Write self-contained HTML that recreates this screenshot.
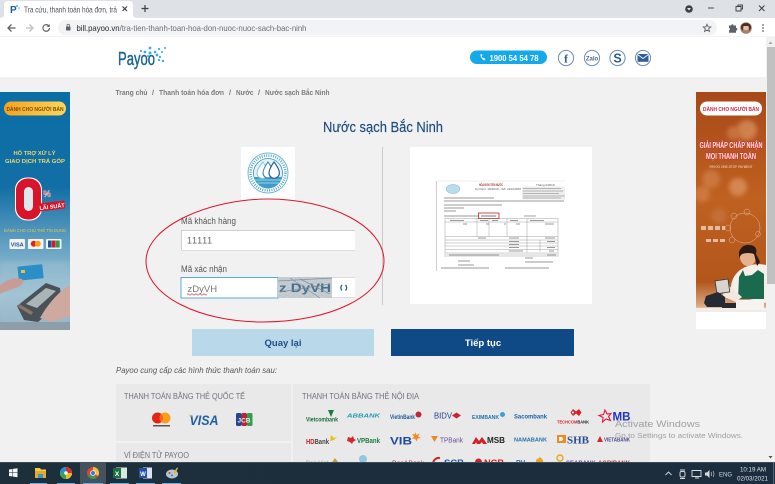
<!DOCTYPE html>
<html><head><meta charset="utf-8"><title>Nước sạch Bắc Ninh</title>
<style>
html,body{margin:0;padding:0;width:775px;height:484px;overflow:hidden;background:#f1f1f1}
svg{display:block;font-family:"Liberation Sans","Noto Sans CJK SC",sans-serif;filter:blur(.3px)}
</style></head><body>
<svg width="775" height="484" viewBox="0 0 775 484" xmlns="http://www.w3.org/2000/svg">
<defs>
<linearGradient id="lb" x1="0" y1="0" x2="0" y2="1"><stop offset="0" stop-color="#0b6ea6"/><stop offset=".4" stop-color="#126fa5"/><stop offset=".62" stop-color="#5c9cc0"/><stop offset=".85" stop-color="#a9c9d9"/><stop offset="1" stop-color="#8fa9b8"/></linearGradient>
<linearGradient id="rb" x1="0" y1="0" x2="0" y2="1"><stop offset="0" stop-color="#a8481a"/><stop offset=".45" stop-color="#bf6120"/><stop offset=".8" stop-color="#b2561c"/><stop offset=".9" stop-color="#dba57e"/><stop offset=".93" stop-color="#f6e8dd"/><stop offset=".95" stop-color="#fff"/></linearGradient>
<linearGradient id="pill" x1="0" y1="0" x2="1" y2="0"><stop offset="0" stop-color="#f5a21c"/><stop offset="1" stop-color="#fbd75a"/></linearGradient>
<linearGradient id="tb" x1="0" y1="0" x2="1" y2="0"><stop offset="0" stop-color="#1d2f3b"/><stop offset="1" stop-color="#1c2d3f"/></linearGradient>
<filter id="b2"><feGaussianBlur stdDeviation="2.5"/></filter>
<filter id="b0"><feGaussianBlur stdDeviation=".3"/></filter>
<filter id="noise" x="0" y="0" width="100%" height="100%"><feTurbulence type="fractalNoise" baseFrequency=".9" numOctaves="2" seed="4"/><feColorMatrix values="0 0 0 0 .45  0 0 0 0 .5  0 0 0 0 .54  1.6 0 0 0 -.35"/></filter>
<clipPath id="lc"><rect x="0" y="92" width="70" height="238"/></clipPath>
<clipPath id="rc"><rect x="696" y="92" width="70" height="237"/></clipPath>
<clipPath id="pc"><rect x="116" y="384" width="534" height="78"/></clipPath>
</defs>

<!-- page -->
<rect width="775" height="484" fill="#f1f1f1"/>

<!-- Chrome tab strip -->
<rect width="775" height="18" fill="#dee1e6"/>
<path d="M0 18 Q4 18 4 14V5Q4 1 8 1H129Q133 1 133 5V14Q133 18 137 18Z" fill="#fff"/>
<text x="10" y="13" font-size="10" font-weight="700" fill="#1b5a92">P</text>
<circle cx="17" cy="6" r="1" fill="#49b4e6"/><circle cx="19" cy="8" r=".8" fill="#49b4e6"/>
<text x="24" y="12.500" font-size="8.300" fill="#4a4d52" textLength="93" lengthAdjust="spacingAndGlyphs">Tra cứu, thanh toán hóa đơn, trả</text>
<path d="M122.500 6.500l4.500 4.500m0-4.500l-4.500 4.500" stroke="#3c4043" stroke-width="1.200" fill="none"/>
<path d="M145 5v7M141.500 8.500h7" stroke="#3c4043" stroke-width="1.200" fill="none"/>
<circle cx="689" cy="9" r="3.800" fill="#3c4043"/><path d="M687 8h4l-2 2.500z" fill="#e4e6ea"/>
<path d="M708 8h6" stroke="#4a4d52" stroke-width="1"/>
<path d="M736 6.500h5v4.500h-5zM738 6.500v-1.500h4.500v4h-1.500" stroke="#3c4043" stroke-width=".9" fill="none"/>
<path d="M759 5.500l5.500 5.500m0-5.500l-5.500 5.500" stroke="#3c4043" stroke-width="1" fill="none"/>

<!-- toolbar -->
<rect y="18" width="775" height="19" fill="#fff"/>
<rect y="36.500" width="775" height="1" fill="#e8eaed"/>
<path d="M15.500 28h-7M11.500 24.500l-3.500 3.500 3.500 3.500" stroke="#5f6368" stroke-width="1.300" fill="none"/>
<path d="M26 28h7M29.500 24.500l3.500 3.500-3.500 3.500" stroke="#bcbfc3" stroke-width="1.300" fill="none"/>
<path d="M49.500 28a3.300 3.300 0 1 1-1-2.400" stroke="#5f6368" stroke-width="1.200" fill="none"/><path d="M49.700 24v3h-3z" fill="#5f6368"/>
<rect x="58" y="20" width="659" height="15.500" rx="7.750" fill="#f1f3f4"/>
<rect x="66" y="26.500" width="4.500" height="4" rx=".5" fill="#5f6368"/><path d="M67 26.500v-1a1.250 1.250 0 0 1 2.500 0v1" stroke="#5f6368" stroke-width=".7" fill="none"/>
<text x="76.500" y="31" font-size="8.300" fill="#6a6d72" textLength="230" lengthAdjust="spacingAndGlyphs"><tspan fill="#26282b">bill.payoo.vn</tspan>/tra-tien-thanh-toan-hoa-don-nuoc-nuoc-sach-bac-ninh</text>
<path d="M707 24.300l1.100 2.500 2.700.2-2.100 1.800.7 2.600-2.400-1.400-2.400 1.400.7-2.600-2.100-1.800 2.700-.2z" stroke="#5f6368" stroke-width=".9" fill="none"/>
<path d="M729 25.500h2.200a1.200 1.200 0 0 1 2.400 0h2.400v2.400a1.300 1.300 0 0 1 0 2.600v2.300h-7v-2.400a1.300 1.300 0 0 0 0-2.500z" fill="#5f6368"/>
<circle cx="746" cy="28" r="5.800" fill="#a9806a"/><circle cx="746" cy="27.500" r="2.800" fill="#e6bfa9"/><path d="M741 28q0-5 5-5t5 5l-1.500 3-1-5h-5l-1 5z" fill="#4b2c22"/>
<circle cx="763" cy="25" r=".9" fill="#5f6368"/><circle cx="763" cy="28" r=".9" fill="#5f6368"/><circle cx="763" cy="31" r=".9" fill="#5f6368"/>

<!-- Page header -->
<rect y="37" width="766" height="40" fill="#fff"/>
<text x="118" y="65" font-size="18.500" fill="#1a6496" stroke="#1a6496" stroke-width=".45" textLength="37" lengthAdjust="spacingAndGlyphs">Payoo</text>
<g fill="#37ade2">
<circle cx="141" cy="51" r="1.100"/><circle cx="145" cy="52" r="1.400"/><circle cx="150" cy="48" r="1.400"/><circle cx="150" cy="53" r="1.500"/><circle cx="155" cy="52" r="1.300"/><circle cx="159" cy="49" r="1.100"/><circle cx="165" cy="48" r="1"/><circle cx="162" cy="52" r="1"/><circle cx="157" cy="55" r="1.400"/><circle cx="160" cy="57" r="1.100"/><circle cx="163" cy="61" r="1.200"/><circle cx="159" cy="60" r="1.100"/><circle cx="148" cy="56" r="1"/>
</g>
<rect x="470" y="50.500" width="77" height="13.500" rx="6.750" fill="#13a9ea"/>
<path d="M480.500 54.500q-.5 3 3.500 6l1.500-1.200-1.500-1.600-1 .6q-1-1-1.300-2l.8-.8-.8-1.700z" fill="#fff"/>
<text x="489.500" y="60.800" font-size="8.500" font-weight="700" fill="#fff" textLength="49" lengthAdjust="spacingAndGlyphs">1900 54 54 78</text>
<g fill="#fff" stroke="#6c8db5" stroke-width="1">
<circle cx="566" cy="58" r="7.600"/><circle cx="592" cy="58" r="7.600"/><circle cx="617.500" cy="58" r="7.600"/><circle cx="643" cy="58" r="7.600"/>
</g>
<text x="566" y="62.500" font-size="12" font-weight="700" fill="#2f5d98" text-anchor="middle" font-family="Liberation Serif">f</text>
<text x="592" y="60.500" font-size="6" font-weight="700" fill="#45699b" text-anchor="middle">Zalo</text>
<text x="617.500" y="62.500" font-size="12.500" font-weight="700" fill="#2f5d98" text-anchor="middle">S</text>
<rect x="637.500" y="54" width="11" height="7.800" fill="#2f5d98"/><path d="M637.500 54.500l5.500 4 5.500-4" stroke="#fff" stroke-width=".8" fill="none"/>

<!-- Scrollbar -->
<rect x="766" y="37" width="9" height="425" fill="#f1f1f1"/>
<rect x="767" y="47" width="8" height="237" fill="#c1c1c1"/>
<path d="M770.500 41.500l-2 2.500h4z" fill="#a3a3a3"/>
<path d="M768.500 456l2 2.500 2-2.500z" fill="#505050"/>

<!-- breadcrumb -->
<g font-size="7.300" font-weight="700" fill="#7b7b7b">
<text x="115.500" y="95" textLength="32" lengthAdjust="spacingAndGlyphs">Trang chủ</text>
<text x="152" y="95">/</text>
<text x="159" y="95" textLength="65" lengthAdjust="spacingAndGlyphs">Thanh toán hóa đơn</text>
<text x="229" y="95">/</text>
<text x="236" y="95" textLength="17.500" lengthAdjust="spacingAndGlyphs">Nước</text>
<text x="258" y="95">/</text>
<text x="265" y="95" textLength="64.500" lengthAdjust="spacingAndGlyphs">Nước sạch Bắc Ninh</text>
</g>

<!-- Left banner -->
<g clip-path="url(#lc)">
<rect y="92" width="70" height="238" fill="url(#lb)"/>
<rect x="4" y="101.500" width="62" height="14" rx="7" fill="url(#pill)"/>
<text x="35" y="110.800" font-size="5" font-weight="700" fill="#7a4a10" text-anchor="middle" textLength="57" lengthAdjust="spacingAndGlyphs">DÀNH CHO NGƯỜI BÁN</text>
<text x="34.500" y="155" font-size="5.800" font-weight="700" fill="#f3d36c" text-anchor="middle" textLength="42" lengthAdjust="spacingAndGlyphs">HỖ TRỢ XỬ LÝ</text>
<text x="35" y="163" font-size="5.800" font-weight="700" fill="#f3d36c" text-anchor="middle" textLength="60" lengthAdjust="spacingAndGlyphs">GIAO DỊCH TRẢ GÓP</text>
<rect x="15" y="177.500" width="27" height="43" rx="12" fill="#fff"/>
<rect x="16" y="178.500" width="25" height="41" rx="11.500" fill="#d8142a"/>
<rect x="24" y="187" width="9" height="24" rx="4.500" fill="#dfe8ee"/>
<text x="47" y="197" font-size="9" font-weight="700" fill="#e01a2c" stroke="#fff" stroke-width=".3" text-anchor="middle">%</text>
<rect x="39" y="202" width="26" height="8" fill="#d8142a" rx="1" transform="rotate(-7 52 206)"/>
<text x="52" y="208.500" font-size="5.500" font-weight="700" fill="#fff" text-anchor="middle" transform="rotate(-7 52 206)">LÃI SUẤT</text>
<text x="35" y="232" font-size="4.400" fill="#e7c94e" text-anchor="middle" textLength="62" lengthAdjust="spacingAndGlyphs">DÀNH CHO CHỦ THẺ TÍN DỤNG</text>
<rect x="9.500" y="239" width="15.500" height="10" rx="1" fill="#f3f3f3"/><text x="17.200" y="246.500" font-size="5.500" font-weight="700" fill="#25508f" text-anchor="middle">VISA</text>
<rect x="28" y="239" width="15.500" height="10" rx="1" fill="#f3f3f3"/><circle cx="33.800" cy="243.800" r="3" fill="#e2231a"/><circle cx="37.800" cy="243.800" r="3" fill="#f79e1b"/>
<rect x="46" y="239" width="15.500" height="10" rx="1" fill="#f3f3f3"/><rect x="48" y="240.500" width="3.700" height="7" fill="#25508f"/><rect x="52" y="240.500" width="3.700" height="7" fill="#c8202f"/><rect x="56" y="240.500" width="3.700" height="7" fill="#2b9c4a"/>
<rect x="0" y="262" width="70" height="68" fill="#9dbfd0" opacity=".5" filter="url(#b2)"/>
<rect x="18" y="265.500" width="25" height="14" rx="1" fill="#2c8ec6" transform="rotate(-6 30 272)"/>
<rect x="21" y="270" width="4" height="3" fill="#e2c24d"/>
<path d="M0 285Q12 276 22 279 26 283 18 287L4 292 0 294z" fill="#c99b97"/>
<path d="M17 306L46 283 60 288 62 302 38 322 24 320z" fill="#4a5258"/>
<path d="M26 304L46 288 56 291 37 308z" fill="#a9b5b7"/>
<path d="M19 304l14 8-2 3-13-8z" fill="#9e7e6e" opacity=".8"/>
<path d="M40 318Q50 300 66 287L70 286V316L52 322z" fill="#cda9a0"/>
<rect y="322" width="70" height="8" fill="#8e9ea8"/>
</g>

<!-- Right banner -->
<g clip-path="url(#rc)">
<rect x="696" y="92" width="70" height="237" fill="url(#rb)"/>
<g filter="url(#b2)" opacity=".55">
<circle cx="747" cy="130" r="10" fill="#e8a878"/><circle cx="734" cy="133" r="7" fill="#d98d58"/><circle cx="711" cy="179" r="9" fill="#d98d58"/><circle cx="738" cy="187" r="9" fill="#e8a878"/><circle cx="702" cy="194" r="8" fill="#d98d58"/><circle cx="719" cy="216" r="8" fill="#cc7a48"/>
</g>
<rect x="700" y="101.500" width="62" height="14" rx="7" fill="#fff"/>
<text x="731" y="110.800" font-size="5" font-weight="700" fill="#d8243a" text-anchor="middle" textLength="56" lengthAdjust="spacingAndGlyphs">DÀNH CHO NGƯỜI BÁN</text>
<g font-size="8" font-weight="700" text-anchor="middle" fill="#fde9e2" stroke="#d8243a" stroke-width=".9" style="paint-order:stroke fill">
<text x="731" y="148" textLength="63" lengthAdjust="spacingAndGlyphs">GIẢI PHÁP CHẤP NHẬN</text>
<text x="731" y="159" textLength="50" lengthAdjust="spacingAndGlyphs">MỌI THANH TOÁN</text>
</g>
<text x="731" y="168" font-size="4" fill="#f6dccf" text-anchor="middle" textLength="43" lengthAdjust="spacingAndGlyphs">PAYOO ONE-STOP PAYMENT</text>
<g fill="none" stroke="#f3d4c0" stroke-width=".5" opacity=".75">
<circle cx="745" cy="228" r="15"/><circle cx="734" cy="216" r="3"/><circle cx="747" cy="212" r="3"/><circle cx="728" cy="228" r="3"/><circle cx="732" cy="240" r="3"/><circle cx="758" cy="234" r="2.500"/>
</g>
<g fill="#f3d9c8" opacity=".75"><rect x="701" y="226" width="5" height="4"/><rect x="708" y="226" width="5" height="4"/><rect x="715" y="226" width="5" height="4"/><rect x="722" y="226" width="3" height="4"/>
<rect x="706" y="239" width="5" height="3"/><rect x="713" y="239" width="5" height="3"/><rect x="720" y="239" width="5" height="3"/></g>
<path d="M740 270Q728 280 732 295L766 303V265Q752 262 740 270z" fill="#f4efe9"/>
<path d="M739 277L738 299 764 299 764 274 758 270 752 275 745 276 743 270z" fill="#1a6a50"/>
<ellipse cx="748" cy="257" rx="8" ry="9" fill="#e6b391"/>
<path d="M739 252Q742 244 750 245 758 246 756 254L760 262 757 266 754 254Q748 252 742 254 740 256 739 258z" fill="#2a1a14"/>
<path d="M728 285L742 297 736 302 722 296z" fill="#f2e8df"/>
<path d="M716 280h13v13h-13z" fill="#d7d3d0" stroke="#333" stroke-width=".8" transform="rotate(-8 722 287)"/>
<path d="M706 296l12-4 7 5v10h-18l-3-4z" fill="#252a35"/>
<rect x="722" y="303" width="14" height="9" fill="#262b33"/>
<rect x="696" y="308" width="70" height="6" fill="#f1ece8"/>
<rect x="736" y="300" width="28" height="10" fill="#f6f3f0"/>
<rect x="696" y="312" width="70" height="18" fill="#fff"/>
</g>

<!-- Title -->
<text x="383" y="132" font-size="14.500" fill="#1c4a7c" stroke="#1c4a7c" stroke-width=".15" text-anchor="middle" textLength="120" lengthAdjust="spacingAndGlyphs">Nước sạch Bắc Ninh</text>

<!-- logo box -->
<rect x="241" y="147" width="54" height="53" fill="#fff"/>
<circle cx="268" cy="173" r="20" fill="#fff" stroke="#6fb8d8" stroke-width="1"/>
<circle cx="268" cy="173" r="14.500" fill="#e4f2f8" stroke="#2c94c0" stroke-width=".8"/>
<path d="M253.800 177h28.400a14.500 14.500 0 0 1-28.400 0z" fill="#3e9ec8"/>
<path d="M255 180h26M257 183h22" stroke="#bfe2f0" stroke-width=".7"/>
<path d="M263 162q-6 7-6 11a5.500 5.500 0 0 0 11 0q0-4-5-11z" fill="#fff" stroke="#8bc4de" stroke-width="1"/>
<path d="M268 162q-5 7-5 11a5 5 0 0 0 10 0q0-4-5-11z" fill="#fff" stroke="#2c7fb5" stroke-width="1"/>
<path d="M274 162q-5 7-5 11a5.200 5.200 0 0 0 10.400 0q0-4-5.400-11z" fill="#fff" stroke="#2b5f9e" stroke-width="1.200"/>
<circle cx="268" cy="173" r="17.500" fill="none" stroke="#5aa8c9" stroke-width="2.500" stroke-dasharray="1 1.300"/>

<!-- divider -->
<rect x="382" y="147" width="1" height="158" fill="#c9c9c9"/>

<!-- Invoice -->
<rect x="410" y="147" width="182" height="157" fill="#fff"/>
<g filter="url(#b0)">
<path d="M436.500 181v90" stroke="#bbb" stroke-width=".7"/>
<path d="M437 181H565" stroke="#ddd" stroke-width=".5"/>
<ellipse cx="453" cy="189" rx="7" ry="4.500" fill="#bcdcec" stroke="#6fb0d2" stroke-width=".5"/>
<text x="479" y="186" font-size="3.300" font-weight="700" fill="#a33a3a" textLength="24" lengthAdjust="spacingAndGlyphs">HÓA ĐƠN TIỀN NƯỚC</text>
<text x="536" y="186" font-size="3" fill="#555">Tháng 2/2019</text>
<text x="475" y="190" font-size="2.500" fill="#555" textLength="46" lengthAdjust="spacingAndGlyphs">Ký hiệu: 19/2019 - Số: 21023456</text>
<rect x="522" y="186.500" width="43" height="13" fill="#eee"/>
<g stroke="#777">
<path d="M523 188.500h38M523 191h40M523 193.500h36M523 196h42M523 198h38" stroke-width=".5"/>
<path d="M444 198h50M444 201h120M444 205h58M444 208h20M444 211h12M444 216h34" stroke-width=".7"/>
<path d="M524 216h12" stroke-width=".7"/>
</g>
<rect x="478.500" y="213" width="20.500" height="5.500" fill="#fff" stroke="#d43434" stroke-width=".9"/>
<path d="M481 216h15" stroke="#555" stroke-width=".8"/>
<g stroke="#888" stroke-width=".4" fill="none">
<rect x="445" y="218.500" width="113" height="38"/>
<path d="M445 222h113M445 236.500h113M445 240h113M445 243h113M445 246h113M445 249.500h113M445 253h113M477 218.500v18M489 218.500v18M507 218.500v18M527 218.500v34M540 240v12"/>
</g>
<rect x="445" y="253" width="113" height="4" fill="#e6e6e6"/>
<g stroke="#777" stroke-width=".7">
<path d="M450 220.500h14M480 220.500h8M492 220.500h6M510 220.500h8M530 220.500h14M463 224h4M486 224h3M504 224h2M516 224h4M545 224h9M478 238h8M509 238h10M509 241.500h10M509 244.500h10M509 247.500h10M509 251h14M545 238h10M547 241.500h8M547 247.500h8M549 251h5M547 255h9M449 255h50"/>
<path d="M458 261h12M458 265h16M441 268h48M505 268h44M525 258h8M525 262h28"/>
</g>
</g>

<!-- Form -->
<text x="181" y="224" font-size="8.800" fill="#555" textLength="55" lengthAdjust="spacingAndGlyphs">Mã khách hàng</text>
<rect x="181" y="230" width="174" height="20.500" fill="#fff"/>
<path d="M181.500 250V230.500H355" stroke="#cfcfcf" fill="none"/><path d="M181 250.500H355" stroke="#ddd"/>
<text x="187" y="243.500" font-size="9" fill="#666" letter-spacing=".7">11111</text>

<text x="181" y="272" font-size="8.800" fill="#555" textLength="46" lengthAdjust="spacingAndGlyphs">Mã xác nhận</text>
<rect x="181" y="277.500" width="97" height="20.500" fill="#fff" stroke="#5ba8e0" stroke-width="1"/>
<text x="187.500" y="292" font-size="9.500" fill="#777">zDyVH</text>
<path d="M187 294.500q1-1.200 2-0t2 0 2 0 2 0 2 0 2 0 2 0 2 0 2 0 2 0" stroke="#d04a4a" stroke-width=".7" fill="none"/>
<rect x="278" y="277" width="54" height="21" fill="#d2d7da"/>
<rect x="278" y="277" width="54" height="21" filter="url(#noise)"/>
<text x="279" y="292" font-size="12" font-weight="700" fill="#45708e" textLength="52" lengthAdjust="spacingAndGlyphs">z DyVH</text>
<path d="M278 281L332 278M280 292L330 284M290 278L320 298M300 279L330 294" stroke="#7f93a0" stroke-width=".7" fill="none"/>
<rect x="332" y="277" width="23" height="21" fill="#fff"/>
<path d="M332 277.500H355M332 297.500H355" stroke="#ddd"/>
<path d="M342 285a3.800 3.800 0 0 0 0 5.500M345.500 285a3.800 3.800 0 0 1 0 5.500" stroke="#2c5f94" stroke-width="1.300" fill="none"/>

<!-- ellipse annotation -->
<path d="M146 261C146 226 210 199 268 199 330 199 384 226 384 261 384 296 330 322 262 322 200 322 146 296 146 261Z" fill="none" stroke="#e2132b" stroke-width="1"/>

<!-- Buttons -->
<rect x="192" y="329" width="182" height="27" fill="#b9d8ea"/>
<text x="283" y="346" font-size="9.500" font-weight="700" fill="#1d4f87" text-anchor="middle">Quay lại</text>
<rect x="391" y="329" width="183" height="27" fill="#0f4a87"/>
<text x="483" y="346" font-size="9.500" font-weight="700" fill="#fff" text-anchor="middle">Tiếp tục</text>

<!-- Payment section -->
<text x="116" y="373" font-size="8.300" font-style="italic" fill="#555" textLength="161" lengthAdjust="spacingAndGlyphs">Payoo cung cấp các hình thức thanh toán sau:</text>
<rect x="116" y="384" width="175" height="57" fill="#e9e9e9"/>
<rect x="116" y="443" width="175" height="19" fill="#e9e9e9"/>
<rect x="293" y="384" width="357" height="78" fill="#e9e9e9"/>
<text x="124" y="399" font-size="8.300" fill="#70707a" textLength="121" lengthAdjust="spacingAndGlyphs">THANH TOÁN BẰNG THẺ QUỐC TẾ</text>
<text x="124" y="458" font-size="8.300" fill="#70707a" textLength="65" lengthAdjust="spacingAndGlyphs">VÍ ĐIỆN TỬ PAYOO</text>
<text x="302" y="399" font-size="8.300" fill="#70707a" textLength="117" lengthAdjust="spacingAndGlyphs">THANH TOÁN BẰNG THẺ NỘI ĐỊA</text>
<circle cx="157.500" cy="418" r="5.500" fill="#e2231a"/><circle cx="165" cy="418" r="5.500" fill="#f79e1b"/><path d="M161.250 414a5.500 5.500 0 0 1 0 8 5.500 5.500 0 0 1 0-8z" fill="#f2641d"/>
<rect x="153" y="425" width="17" height="1.500" fill="#555"/>
<text x="204" y="425" font-size="13.500" font-weight="700" font-style="italic" fill="#1f5fa8" text-anchor="middle" textLength="29" lengthAdjust="spacingAndGlyphs">VISA</text>
<path d="M189 414l3 3h-2z" fill="#f1a11f"/>
<rect x="236" y="413" width="5.500" height="13" rx="1.500" fill="#24478f"/><rect x="241.500" y="413" width="5.500" height="13" rx="1.500" fill="#bd2334"/><rect x="247" y="413" width="5.500" height="13" rx="1.500" fill="#2f9e4c"/>
<text x="244" y="422.500" font-size="6.500" font-weight="700" fill="#e7eef5" text-anchor="middle">JCB</text>

<g clip-path="url(#pc)">
<path d="M328 410h6l-3 7z" fill="#1c7a3e"/>
<text x="306" y="421.500" font-size="6" font-weight="700" fill="#1b6b3a" textLength="32" lengthAdjust="spacingAndGlyphs">Vietcombank</text>
<text x="347" y="417.500" font-size="5.500" font-weight="700" font-style="italic" fill="#1d9cb0" textLength="33" lengthAdjust="spacingAndGlyphs">ABBANK</text>
<text x="390" y="419" font-size="6" font-weight="700" fill="#1c5a96" textLength="25" lengthAdjust="spacingAndGlyphs">VietinBank</text><circle cx="418.500" cy="414.500" r="3" fill="#c9233a"/>
<text x="434" y="418.500" font-size="8.500" fill="#213f8f" textLength="18" lengthAdjust="spacingAndGlyphs">BIDV</text><path d="M456.500 412.500l4.500 3-4.500 3-4.500-3z" fill="#cf2030"/>
<text x="472" y="419" font-size="5.500" font-weight="700" fill="#2275a6" textLength="27" lengthAdjust="spacingAndGlyphs">EXIMBANK</text><circle cx="502.500" cy="414.500" r="2.500" fill="#3ba0d2"/>
<text x="514" y="418.500" font-size="6.500" font-weight="700" fill="#1a60a8" textLength="33" lengthAdjust="spacingAndGlyphs">Sacombank</text>
<path d="M573 409l3 2.500 3-2.500 2.500 3.500-2.500 3.500-3-2.500-3 2.500-2.500-3.500z" fill="#d91f26"/><circle cx="573" cy="412.500" r="1" fill="#fff"/>
<text x="557" y="423.500" font-size="4.500" font-weight="700" textLength="32" lengthAdjust="spacingAndGlyphs"><tspan fill="#d91f26">TECHCOM</tspan><tspan fill="#222">BANK</tspan></text>
<path d="M605 410l2 4 4-.5-2.500 3 2 4-4.500-1.500-3.500 3 .5-4.500-4-2 4.500-1z" fill="none" stroke="#e4173c" stroke-width="1.100"/>
<text x="612.500" y="420.500" font-size="11.500" font-weight="700" fill="#2134c2" textLength="18" lengthAdjust="spacingAndGlyphs">MB</text>

<text x="306" y="444" font-size="7.500" font-weight="700" textLength="23" lengthAdjust="spacingAndGlyphs"><tspan fill="#d01f27">HD</tspan><tspan fill="#444">Bank</tspan></text>
<path d="M331 435l3 3 3-1-3 3-4 1z" fill="#e8c21c"/>
<path d="M348 437l3 1 2-2 1 3 2 1-3 2-1 2-2-2-3-1z" fill="#d6252e"/>
<text x="357" y="443" font-size="7" font-weight="700" textLength="23" lengthAdjust="spacingAndGlyphs" fill="#1b7a40">VPBank</text>
<text x="390" y="444.500" font-size="11" font-weight="700" fill="#1e4a9c" textLength="22" lengthAdjust="spacingAndGlyphs">VIB</text>
<path d="M415 432l1.500 3 3-1.500-1.500 3 3 1.500-3.500.5-1 3-1.500-3-3 .5 2-2.500-2-2.500 3 .5z" fill="#ef8a1d"/>
<path d="M431 436h7l-3.500 6z" fill="#f08a1e"/>
<text x="440" y="442.500" font-size="7.500" textLength="23" lengthAdjust="spacingAndGlyphs" fill="#6c4aa0">TPBank</text>
<path d="M472 444l4-7 3 4 3-4 3 4 2 3h-4l-1-2-2 2h-3l-1-2-1 2z" fill="#d41f26"/>
<text x="487" y="443" font-size="8" font-weight="700" fill="#222" textLength="18" lengthAdjust="spacingAndGlyphs">MSB</text>
<text x="514" y="441.500" font-size="5" font-weight="700" fill="#2a6fa8" textLength="33" lengthAdjust="spacingAndGlyphs">NAMABANK</text>
<rect x="557" y="435" width="9" height="8" fill="#f08a1e"/><path d="M559 437h3l1 2-1 2h-3z" fill="#fff"/>
<text x="567" y="443.500" font-size="10" font-weight="700" fill="#274a92" font-family="Liberation Serif" textLength="22" lengthAdjust="spacingAndGlyphs">SHB</text>
<path d="M600 436l3 6h-6z" fill="#d7232f"/>
<text x="604" y="441.500" font-size="5" font-weight="700" fill="#4a4a8a" textLength="26" lengthAdjust="spacingAndGlyphs">VIETABANK</text>

<text x="306" y="465" font-size="6" fill="#999">Bao Viet</text>
<path d="M335 458l3 4h-6z" fill="#c89a50"/>
<circle cx="363" cy="459" r="4" fill="#8fc8e0"/>
<text x="392" y="465" font-size="6" fill="#a03a3a" textLength="32" lengthAdjust="spacingAndGlyphs">BacABank</text>
<path d="M440 458a6 6 0 0 0-7 6" stroke="#d41f26" stroke-width="2" fill="none"/>
<text x="444" y="466" font-size="9" font-weight="700" fill="#1c5aa8" textLength="20" lengthAdjust="spacingAndGlyphs">SCB</text>
<circle cx="478.500" cy="462" r="3.500" fill="#d41f26"/>
<text x="484" y="466" font-size="9" font-weight="700" fill="#d41f26" textLength="20" lengthAdjust="spacingAndGlyphs">NCB</text>
<text x="516" y="465" font-size="7" font-weight="700" fill="#2a6fb0">PV</text><path d="M536 460l4-3 3 3v3h-7z" fill="#e9a520"/>
<circle cx="560" cy="458" r="3" fill="none" stroke="#e9a520" stroke-width="1.400"/>
<text x="566" y="465" font-size="6" font-weight="700" fill="#6a4a88">SEABANK</text>
<text x="598" y="465" font-size="6" font-weight="700" fill="#a83a3a" textLength="32" lengthAdjust="spacingAndGlyphs">AGRIBANK</text>
</g>

<!-- Activate Windows -->
<text x="615" y="427" font-size="9.500" fill="#a0a0a0" textLength="85" lengthAdjust="spacingAndGlyphs">Activate Windows</text>
<text x="615" y="438" font-size="7.500" fill="#a0a0a0" textLength="128" lengthAdjust="spacingAndGlyphs">Go to Settings to activate Windows.</text>

<!-- Taskbar -->
<rect y="462" width="775" height="22" fill="url(#tb)"/>
<rect y="462" width="775" height=".7" fill="#4a5660"/>
<rect x="80" y="462" width="26" height="22" fill="#43525c"/>
<path d="M9 469.500l3.500-.5v3.500H9zM13 468.900l4.500-.7v4.300H13zM9 473h3.500v3.500L9 476zM13 473h4.500v4.300L13 476.600z" fill="#f3f5f6"/>
<path d="M35 468h5l1 1.500h5V478H35z" fill="#f2c94c"/><rect x="35" y="471" width="11" height="7" fill="#e5ac2b"/><rect x="38" y="474" width="5" height="4" fill="#3a94d4"/>
<circle cx="66" cy="473" r="6" fill="#eee"/><path d="M66 467a6 6 0 0 1 6 6h-6z" fill="#d92c2c"/><path d="M60 473a6 6 0 0 1 6-6v6z" fill="#2c8ec6"/><path d="M66 479a6 6 0 0 1-6-6h6z" fill="#3da24a"/><path d="M72 473a6 6 0 0 1-6 6v-6z" fill="#e8b92a"/><circle cx="66" cy="473" r="1.800" fill="#fff"/>
<circle cx="93" cy="473" r="6" fill="#e04234"/><path d="M93 473l-5.200 3a6 6 0 0 0 8.200 2.200z" fill="#2f9e4c"/><path d="M93 467a6 6 0 0 1 5.200 9L93 473z" fill="#f5c02c"/><path d="M93 473l3 5.200a6 6 0 0 1-3 .8l2-6z" fill="#2f9e4c"/><circle cx="93" cy="473" r="2.800" fill="#fff"/><circle cx="93" cy="473" r="2.100" fill="#3b78e7"/>
<rect x="116" y="467.500" width="11" height="11" fill="#d8e8dd"/><rect x="113" y="468" width="8" height="10" fill="#1e6e3f"/><text x="117" y="476" font-size="6.500" font-weight="700" fill="#fff" text-anchor="middle">X</text>
<rect x="143" y="467.500" width="9" height="11" fill="#d8e2f2"/><rect x="139" y="468" width="8" height="10" fill="#24529c"/><text x="143" y="476" font-size="6" font-weight="700" fill="#fff" text-anchor="middle">W</text>
<ellipse cx="172" cy="474" rx="6" ry="4.500" fill="#b7c5cc"/><circle cx="169.500" cy="473" r="1" fill="#d8332c"/><circle cx="172" cy="475.500" r="1" fill="#2f7ec4"/><circle cx="174.500" cy="473" r="1" fill="#e8b92a"/><path d="M174 472l3-4.500 1 .7-2.500 4.500z" fill="#e8b92a"/>
<g fill="#5cb1e6"><rect x="30" y="483" width="17" height="1"/><rect x="57" y="483" width="18" height="1"/><rect x="83" y="483" width="20" height="1"/><rect x="110" y="483" width="19" height="1"/><rect x="136" y="483" width="19" height="1"/><rect x="162" y="483" width="19" height="1"/></g>

<path d="M665.500 475l3-3 3 3" stroke="#d7dcdf" stroke-width=".9" fill="none"/>
<rect x="680" y="471.500" width="5" height="5.500" rx="1.500" fill="none" stroke="#d7dcdf" stroke-width=".9"/><path d="M680 470h5" stroke="#d7dcdf"/><path d="M680 478.500h5" stroke="#d7dcdf"/>
<path d="M692 470.500h9v6h-9zM695 478h4" stroke="#d7dcdf" stroke-width=".9" fill="none"/>
<path d="M705 472.500h2l2.500-2.500v8l-2.500-2.500h-2z" fill="#d7dcdf"/><path d="M711 472q1.500 2 0 4M713 471q2 3 0 6" stroke="#d7dcdf" stroke-width=".6" fill="none"/>
<text x="719" y="476.500" font-size="6.500" fill="#d7dcdf" textLength="13" lengthAdjust="spacingAndGlyphs">ENG</text>
<text x="766" y="471.500" font-size="6.500" fill="#dfe3e6" text-anchor="end" textLength="26" lengthAdjust="spacingAndGlyphs">10:19 AM</text>
<text x="768" y="480.500" font-size="6.500" fill="#dfe3e6" text-anchor="end" textLength="31" lengthAdjust="spacingAndGlyphs">02/03/2021</text>
<rect x="773" y="462" width=".8" height="22" fill="#6a7680"/>
</svg>
</body></html>
